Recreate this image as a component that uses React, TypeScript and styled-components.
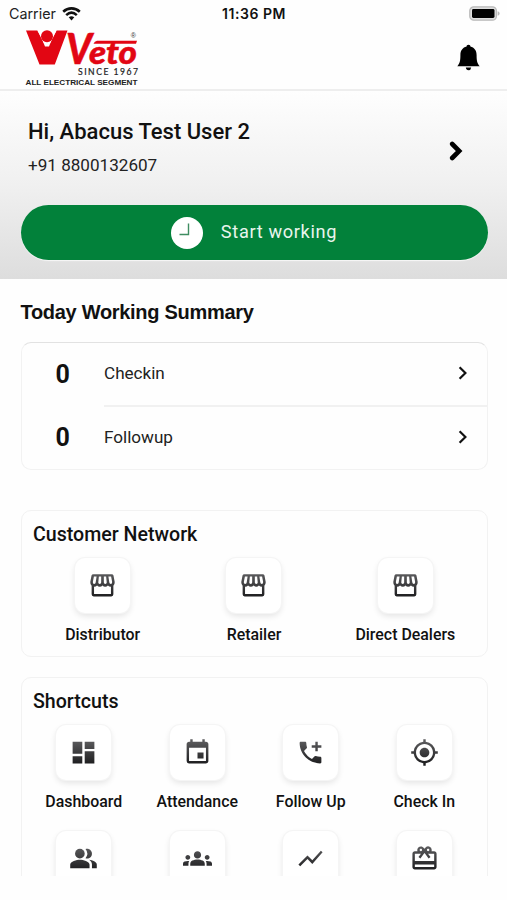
import React from "react";
import styled, { createGlobalStyle } from "styled-components";
import type { IconType } from "react-icons";
import {
  MdAddIcCall,
  MdDashboard,
  MdEvent,
  MdGroups,
  MdMyLocation,
  MdPeopleAlt,
  MdRedeem,
  MdShowChart,
} from "react-icons/md";

const GlobalStyle = createGlobalStyle`
  * { box-sizing: border-box; }
  html, body { margin: 0; background: #fefefe; }
  body { font-family: Roboto, "Liberation Sans", sans-serif; color: #111; overflow: hidden; }
  button { font: inherit; color: inherit; border: 0; padding: 0; background: none; }
`;

const Screen = styled.main`
  width: 507px;
  height: 876px;
  overflow: hidden;
  display: flex;
  flex-direction: column;
`;

const StatusBar = styled.div`
  height: 27px;
  flex: none;
  display: grid;
  grid-template-columns: 1fr auto 1fr;
  align-items: center;
  padding: 0 7px 0 9px;
  font-family: Inter, sans-serif;
`;

const Carrier = styled.div`
  display: flex;
  align-items: center;
  gap: 6px;
  font-size: 14.3px;
  color: #222;
`;

const Time = styled.div`
  padding-right: 1px;
  font-size: 14px;
  font-weight: 600;
  letter-spacing: 0.55px;
`;

const BatterySlot = styled.div`
  display: flex;
  justify-content: flex-end;
`;

const Header = styled.header`
  height: 64px;
  flex: none;
  display: flex;
  justify-content: space-between;
  align-items: flex-start;
  padding: 1px 26px 0 24px;
  border-bottom: 2px solid #eeeeee;
`;

const BellButton = styled.button`
  display: flex;
  margin-top: 16px;
`;

const Profile = styled.section`
  height: 188px;
  flex: none;
  padding: 28px 20px 0 20px;
  background: linear-gradient(#fefefe, #f0f0f0 50%, #dddddd);
`;

const UserRow = styled.div`
  display: flex;
  justify-content: space-between;
  height: 86px;
  padding: 0 24.5px 0 8px;
`;

const UserName = styled.h1`
  margin: 0;
  font-size: 22px;
  line-height: 26px;
  font-weight: 500;
`;

const Phone = styled.div`
  margin-top: 10px;
  font-size: 17.1px;
  line-height: 20px;
  color: #222;
`;

const ProfileArrow = styled.div`
  padding-top: 22px;
`;

const StartButton = styled.button`
  width: 467px;
  height: 55px;
  margin-left: 0.5px;
  border-radius: 28px;
  background: #02813a;
  color: #fff;
  display: flex;
  align-items: center;
  justify-content: center;
  gap: 18px;
  font-size: 18.2px;
  letter-spacing: 0.65px;
  box-shadow: 0 1px 1px #f8f8f8;
`;

const StartLabel = styled.span`
  color: #e9f5ed;
  padding-bottom: 2px;
`;

const SectionTitle = styled.h2`
  margin: 20px 0 0 20.5px;
  font-family: "Liberation Sans", sans-serif;
  font-size: 20px;
  letter-spacing: -0.3px;
  line-height: 26px;
  font-weight: 700;
`;

const Card = styled.section<{ $top: number; $height: number }>`
  width: 467px;
  height: ${(p) => p.$height}px;
  flex: none;
  margin: ${(p) => p.$top}px 0 0 20.5px;
  border: 1px solid #f2f2f2;
  border-radius: 10px;
  background: #fefefe;
`;

const SummaryCard = styled(Card)`
  border-top-color: #e2e2e2;
`;

const SummaryRow = styled.div`
  height: 64px;
  display: grid;
  grid-template-columns: 82.5px 1fr;
  align-items: center;

  &:first-child { height: 62px; }
  & + & > :last-child { border-top: 2px solid #f1f1f1; }
`;

const Count = styled.span`
  text-align: center;
  font-size: 25px;
  font-weight: 700;
`;

const SummaryLink = styled.div`
  height: 100%;
  display: flex;
  align-items: center;
  justify-content: space-between;
  padding: 0 19.5px 2px 0;
  font-size: 17.1px;
  color: #222;
`;

const CardTitle = styled.h2`
  margin: 10.5px 0 0 11.5px;
  font-size: 19.6px;
  line-height: 26px;
  font-weight: 500;
`;

const TileGrid = styled.div<{ $columns: number }>`
  display: grid;
  grid-template-columns: repeat(${(p) => p.$columns}, 1fr);
  row-gap: 20px;
  margin: 10.5px 5.5px 0 5.5px;
`;

const Tile = styled.div`
  display: flex;
  flex-direction: column;
  align-items: center;
`;

const TileIcon = styled.span`
  width: 55px;
  height: 55px;
  display: flex;
  align-items: center;
  justify-content: center;
  border-radius: 10px;
  background: #fff;
  box-shadow: 0 0 0 1px #f5f5f5, 0 3px 6px rgba(0, 0, 0, 0.11);

  svg { width: 29px; height: 29px; margin-top: -1px; }
  svg circle,
  svg path:not([fill="none"]) { fill: url(#ink); }
`;

const TileLabel = styled.span`
  margin-top: 12px;
  height: 19px;
  font-size: 15.9px;
  line-height: 19px;
  font-weight: 500;
  white-space: nowrap;
`;

const Defs = styled.svg`
  display: block;
  width: 0;
  height: 0;
`;

const BrandMark = styled.svg`
  display: block;
  overflow: visible;
`;

const Brand = () => (
  <BrandMark width="117" height="60" viewBox="0 0 117 60" role="img" aria-label="Veto">
    <path d="M2 2.5H13.4L17.4 9.5L21 18.5H25L28.6 9.5L32.6 2.5H43.5L30.8 36.5H15.5Z" fill="#e20613" />
    <path d="M13.4 2.5H32.6L26 15.5Q23 18.5 20 15.5Z" fill="#fff" />
    <circle cx="23" cy="8.2" r="6" fill="#e20613" />
    <g fill="#e20613" stroke="#e20613" strokeWidth="0.5" fontFamily="Lato, sans-serif" fontWeight="900" fontStyle="italic">
      <text x="42" y="36" fontSize="42" textLength="26" lengthAdjust="spacingAndGlyphs">V</text>
      <text x="65" y="36" fontSize="32" textLength="48" lengthAdjust="spacingAndGlyphs">eto</text>
    </g>
    <path d="M73 12.8H113L112 15.8H69.5Q70.5 13.2 73 12.8Z" fill="#e20613" />
    <text x="106.8" y="10" fill="#333" fontFamily="Liberation Sans, sans-serif" fontSize="7">®</text>
    <text x="54" y="46.8" fill="#222" stroke="#222" strokeWidth="0.2" fontFamily="Lato, sans-serif" fontSize="8.6" textLength="60">SINCE 1967</text>
    <text x="1.5" y="57" fill="#222" fontFamily="Liberation Sans, sans-serif" fontWeight="700" fontSize="7.9" textLength="112" lengthAdjust="spacingAndGlyphs">ALL ELECTRICAL SEGMENT</text>
  </BrandMark>
);

const Wifi = () => (
  <svg width="19" height="14" viewBox="0 0 19 14" fill="none" stroke="#111" strokeWidth="2.6">
    <path d="M1.2 4.7C6 .3 13 .3 17.8 4.7" />
    <path d="M4.2 8.1C7.5 5.1 11.5 5.1 14.8 8.1" />
    <path d="M6.7 10.3Q9.5 8 12.3 10.3L9.5 13.4Z" fill="#111" stroke="none" />
  </svg>
);

const Battery = () => (
  <svg width="31" height="15" viewBox="0 0 31 15">
    <rect x="0.8" y="0.8" width="26.6" height="13.4" rx="4" fill="#dedede" stroke="#b9b9b9" strokeWidth="1.3" />
    <rect x="3" y="3" width="22.5" height="9" rx="1.4" fill="#000" />
    <path d="M28.6 5.2Q30.6 5.8 30.6 7.5T28.6 9.8Z" fill="#b9b9b9" />
  </svg>
);

const Bell = () => (
  <svg width="25" height="27" viewBox="0 0 25 27">
    <path d="M12.5.8C13.8.8 14.4 1.6 14.4 2.6C18.3 3.5 20.6 6.6 20.6 11C20.6 17 21.2 19.3 23.7 22.2H1.3C3.8 19.3 4.4 17 4.4 11C4.4 6.6 6.7 3.5 10.6 2.6C10.6 1.6 11.2.8 12.5.8Z" fill="#000" />
    <path d="M9.8 23.5H15.2Q14.8 26.3 12.5 26.3T9.8 23.5Z" fill="#000" />
  </svg>
);

const Clock = () => (
  <svg width="32" height="32" viewBox="0 0 32 32">
    <circle cx="16" cy="16" r="16" fill="#fff" />
    <path d="M17.5 6.5V17.5H8.5" fill="none" stroke="#3f8d61" strokeWidth="1.4" />
  </svg>
);

const Chevron = ({ bold = false }: { bold?: boolean }) =>
  bold ? (
    <svg width="14" height="20" viewBox="0 0 14 20" fill="none" stroke="#000" strokeWidth="4.6" strokeLinecap="round">
      <path d="M3.2 3L10.2 10L3.2 17" strokeLinejoin="miter" />
    </svg>
  ) : (
    <svg width="9" height="14" viewBox="0 0 9 14" fill="none" stroke="#111" strokeWidth="2.2">
      <path d="M1.6 1.2L7.4 7L1.6 12.8" />
    </svg>
  );

const Storefront = () => (
  <svg viewBox="0 0 24 24">
    <path
      fillRule="evenodd"
      d="M4.4 2.7H19.6Q20.8 2.7 21.1 3.8L22.1 9Q22.2 11.2 21 12.3V19.3Q21 21 19.3 21H4.7Q3 21 3 19.3V12.3Q1.8 11.2 1.9 9L2.9 3.8Q3.2 2.7 4.4 2.7Z
      M4.9 4.6L4 9Q3.9 10.7 5.1 10.7T6.4 9.4L7.1 4.6Z
      M9 4.6L8.5 9.5Q8.5 10.7 9.7 10.7T10.9 9.5V4.6Z
      M13.1 4.6V9.5Q13.1 10.7 14.3 10.7T15.5 9.5L15 4.6Z
      M16.9 4.6L17.6 9.4Q17.8 10.7 18.9 10.7T20 9L19.1 4.6Z
      M5 13V19H19V13Q17.4 13 16.5 12Q15.5 13 14.2 13T12 12Q11.1 13 9.8 13T7.5 12Q6.6 13 5 13Z"
    />
  </svg>
);

type TileItem = { label: string; icon: IconType };

const network: TileItem[] = [
  { label: "Distributor", icon: Storefront },
  { label: "Retailer", icon: Storefront },
  { label: "Direct Dealers", icon: Storefront },
];

const shortcuts: TileItem[] = [
  { label: "Dashboard", icon: MdDashboard },
  { label: "Attendance", icon: MdEvent },
  { label: "Follow Up", icon: MdAddIcCall },
  { label: "Check In", icon: MdMyLocation },
  { label: "", icon: MdPeopleAlt },
  { label: "", icon: MdGroups },
  { label: "", icon: MdShowChart },
  { label: "", icon: MdRedeem },
];

const Tiles = ({ items, columns }: { items: TileItem[]; columns: number }) => (
  <TileGrid $columns={columns}>
    {items.map(({ label, icon: Icon }, i) => (
      <Tile key={i}>
        <TileIcon><Icon /></TileIcon>
        <TileLabel>{label}</TileLabel>
      </Tile>
    ))}
  </TileGrid>
);

export default function App() {
  return (
    <>
      <GlobalStyle />
      <Defs aria-hidden="true">
        <defs>
          <linearGradient id="ink" gradientUnits="userSpaceOnUse" x1="0" y1="2" x2="0" y2="22">
            <stop offset="0" stopColor="#5c5c5e" />
            <stop offset="1" stopColor="#1c1c1e" />
          </linearGradient>
        </defs>
      </Defs>
      <Screen>
        <StatusBar>
          <Carrier>Carrier <Wifi /></Carrier>
          <Time>11:36 PM</Time>
          <BatterySlot><Battery /></BatterySlot>
        </StatusBar>
        <Header>
          <Brand />
          <BellButton aria-label="Notifications"><Bell /></BellButton>
        </Header>
        <Profile>
          <UserRow>
            <div>
              <UserName>Hi, Abacus Test User 2</UserName>
              <Phone>+91 8800132607</Phone>
            </div>
            <ProfileArrow><Chevron bold /></ProfileArrow>
          </UserRow>
          <StartButton>
            <Clock />
            <StartLabel>Start working</StartLabel>
          </StartButton>
        </Profile>
        <SectionTitle>Today Working Summary</SectionTitle>
        <SummaryCard $top={17} $height={128}>
          {["Checkin", "Followup"].map((name) => (
            <SummaryRow key={name}>
              <Count>0</Count>
              <SummaryLink>{name}<Chevron /></SummaryLink>
            </SummaryRow>
          ))}
        </SummaryCard>
        <Card $top={40} $height={147}>
          <CardTitle>Customer Network</CardTitle>
          <Tiles items={network} columns={3} />
        </Card>
        <Card $top={20} $height={330}>
          <CardTitle>Shortcuts</CardTitle>
          <Tiles items={shortcuts} columns={4} />
        </Card>
      </Screen>
    </>
  );
}
